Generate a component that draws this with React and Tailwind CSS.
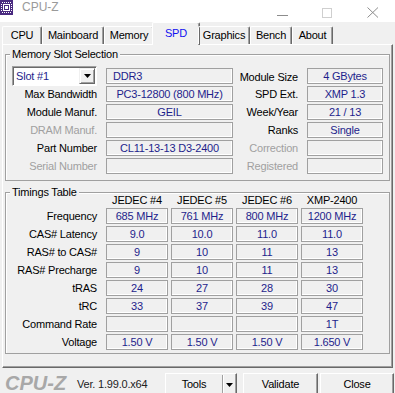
import React from "react";

const VAL = "text-[#1e1e8c]";

function Field({ className = "", children, left = false }) {
  return (
    <div
      className={`h-[16px] border border-[#a0a0a0] shadow-[inset_-1px_-1px_0_#ffffff] flex items-center leading-none whitespace-nowrap ${VAL} ${
        left ? "justify-start pl-[6px]" : "justify-center"
      } ${className}`}
    >
      {children}
    </div>
  );
}

function AppIcon() {
  return (
    <svg width="13" height="15" viewBox="0 0 13 15" className="block">
      <rect x="0" y="0" width="13" height="15" fill="#4a2a80" />
      <g fill="#ffffff">
        <rect x="2" y="2" width="1" height="1" />
        <rect x="4" y="2" width="1" height="1" />
        <rect x="6" y="2" width="1" height="1" />
        <rect x="8" y="2" width="1" height="1" />
        <rect x="10" y="2" width="1" height="1" />
        <rect x="2" y="12" width="1" height="1" />
        <rect x="4" y="12" width="1" height="1" />
        <rect x="6" y="12" width="1" height="1" />
        <rect x="8" y="12" width="1" height="1" />
        <rect x="10" y="12" width="1" height="1" />
        <rect x="1" y="4" width="1" height="1" />
        <rect x="1" y="6" width="1" height="1" />
        <rect x="1" y="8" width="1" height="1" />
        <rect x="1" y="10" width="1" height="1" />
        <rect x="11" y="4" width="1" height="1" />
        <rect x="11" y="6" width="1" height="1" />
        <rect x="11" y="8" width="1" height="1" />
        <rect x="11" y="10" width="1" height="1" />
      </g>
      <rect x="3.5" y="4.5" width="6" height="6" fill="none" stroke="#ffffff" strokeWidth="1" />
      <rect x="5" y="6" width="3" height="3" fill="#ffffff" />
    </svg>
  );
}

function DownTri() {
  return (
    <svg width="7" height="4" viewBox="0 0 7 4" className="block">
      <polygon points="0,0 7,0 3.5,4" fill="#000000" />
    </svg>
  );
}

const tabs = [
  { name: "CPU", cls: "w-[40px]" },
  { name: "Mainboard", cls: "w-[62px]" },
  { name: "Memory", cls: "w-[50px]" },
  { name: "SPD", cls: "w-[44px]", active: true },
  { name: "Graphics", cls: "w-[52px]" },
  { name: "Bench", cls: "w-[42px]" },
  { name: "About", cls: "w-[41px]" },
];

const slotRows = [
  { l: "Max Bandwidth", v: "PC3-12800 (800 MHz)", r: "SPD Ext.", rv: "XMP 1.3" },
  { l: "Module Manuf.", v: "GEIL", r: "Week/Year", rv: "21 / 13" },
  { l: "DRAM Manuf.", dis: true, v: "", r: "Ranks", rv: "Single" },
  { l: "Part Number", v: "CL11-13-13 D3-2400", r: "Correction", rdis: true, rv: "" },
  { l: "Serial Number", dis: true, v: "", r: "Registered", rdis: true, rv: "" },
];

const timings = [
  { l: "Frequency", v: ["685 MHz", "761 MHz", "800 MHz", "1200 MHz"] },
  { l: "CAS# Latency", v: ["9.0", "10.0", "11.0", "11.0"] },
  { l: "RAS# to CAS#", v: ["9", "10", "11", "13"] },
  { l: "RAS# Precharge", v: ["9", "10", "11", "13"] },
  { l: "tRAS", v: ["24", "27", "28", "30"] },
  { l: "tRC", v: ["33", "37", "39", "47"] },
  { l: "Command Rate", v: ["", "", "", "1T"] },
  { l: "Voltage", v: ["1.50 V", "1.50 V", "1.50 V", "1.650 V"] },
];

const BTN =
  "h-[23px] bg-[#f0f0f0] border border-t-white border-l-white border-r-[#696969] border-b-[#696969] shadow-[inset_-1px_-1px_0_#a0a0a0] flex items-center";

export default function App() {
  return (
    <div className="w-[395px] h-[393px] overflow-hidden bg-[#f0f0f0] font-['Liberation_Sans',Arial,sans-serif] text-[11px] tracking-[-0.2px] text-black">
      {/* title bar */}
      <div className="h-[22px] bg-white flex items-start">
        <div className="pt-0">
          <AppIcon />
        </div>
        <div className="ml-[9px] mt-[1px] text-[12px] leading-[13px] tracking-normal text-[#9a9a9a]">CPU-Z</div>
        <div className="ml-auto flex items-start">
          <div className="w-[11px] h-[1px] bg-[#8c8c8c] mt-[15px]" />
          <div className="w-[10px] h-[10px] border border-[#cfcfcf] mt-[8px] ml-[34px]" />
          <svg width="12" height="11" viewBox="0 0 12 11" className="block mt-[7px] ml-[35px] mr-[16px]">
            <path d="M0.5 0.5 L11 10.5 M11 0.5 L0.5 10.5" stroke="#8c8c8c" strokeWidth="1" fill="none" />
          </svg>
        </div>
      </div>

      {/* tabs */}
      <div className="h-[22px] flex items-end pl-[2px] relative z-10">
        {tabs.map((t) =>
          t.active ? (
            <div
              key={t.name}
              className="w-[48px] -mx-[2px] h-[23px] -mb-px bg-[#f0f0f0] border-l border-t border-r border-l-white border-t-white border-r-[#696969] shadow-[inset_-1px_0_0_#a0a0a0] rounded-t-[2px] flex items-start justify-center pt-[4px] text-[#1010f0] leading-[13px]"
            >
              {t.name}
            </div>
          ) : (
            <div
              key={t.name}
              className={`${t.cls} h-[18px] border-l border-t border-r border-l-white border-t-white border-r-[#696969] shadow-[inset_-1px_0_0_#a0a0a0] rounded-t-[2px] flex items-center justify-center leading-[13px]`}
            >
              {t.name}
            </div>
          )
        )}
      </div>

      {/* panel */}
      <div className="ml-[2px] w-[391px] h-[324px] border border-t-white border-l-white border-r-[#696969] border-b-[#696969] shadow-[inset_-1px_-1px_0_#a0a0a0] px-[2px]">
        {/* Memory Slot Selection */}
        <fieldset className="mt-[2px] h-[134px] border border-[#a0a0a0] shadow-[inset_1px_1px_0_#ffffff] pl-[6px] pt-[6px]">
          <legend className="ml-[-2px] px-[2px] leading-[14px] bg-[#f0f0f0]">Memory Slot Selection</legend>
          <div className="flex flex-col">
            <div className="h-[18px] flex items-center">
              <div className="w-[85px] h-[20px] bg-white border border-t-[#a0a0a0] border-l-[#a0a0a0] border-r-white border-b-white shadow-[inset_1px_1px_0_#696969] flex items-center">
                <span className={`pl-[3px] flex-1 ${VAL} leading-none`}>Slot #1</span>
                <div className="w-[16px] h-[16px] mr-[1px] bg-[#f0f0f0] border border-t-[#f0f0f0] border-l-[#f0f0f0] border-r-[#696969] border-b-[#696969] shadow-[inset_1px_1px_0_#ffffff,inset_-1px_-1px_0_#a0a0a0] flex items-center justify-center">
                  <DownTri />
                </div>
              </div>
              <Field className="ml-[9px] w-[127px]" left>
                DDR3
              </Field>
              <div className="w-[65px] text-right leading-[14px] pt-[2px]">Module Size</div>
              <Field className="ml-[9px] w-[76px]">4 GBytes</Field>
            </div>
            {slotRows.map((r) => (
              <div key={r.l} className="h-[18px] flex items-center">
                <div className={`w-[85px] text-right leading-[14px] ${r.dis ? "text-[#a0a0a0]" : ""}`}>{r.l}</div>
                <Field className="ml-[9px] w-[127px]">{r.v}</Field>
                <div className={`w-[65px] text-right leading-[14px] ${r.rdis ? "text-[#a0a0a0]" : ""}`}>{r.r}</div>
                <Field className="ml-[9px] w-[76px]">{r.rv}</Field>
              </div>
            ))}
          </div>
        </fieldset>

        {/* Timings Table */}
        <fieldset className="mt-[4px] h-[169px] border border-[#a0a0a0] shadow-[inset_1px_1px_0_#ffffff] pl-[6px]">
          <legend className="ml-[-2px] px-[2px] leading-[14px] bg-[#f0f0f0]">Timings Table</legend>
          <div className="flex flex-col">
            <div className="-mt-[7px] h-[15px] flex items-center">
              <div className="w-[85px]" />
              <div className="ml-[9px] flex gap-[3px]">
                <div className="w-[62px] text-center leading-[14px]">JEDEC #4</div>
                <div className="w-[62px] text-center leading-[14px]">JEDEC #5</div>
                <div className="w-[62px] text-center leading-[14px]">JEDEC #6</div>
                <div className="w-[62px] text-center leading-[14px]">XMP-2400</div>
              </div>
            </div>
            {timings.map((r) => (
              <div key={r.l} className="h-[18px] flex items-center">
                <div className="w-[85px] text-right leading-[14px] whitespace-nowrap">{r.l}</div>
                <div className="ml-[9px] flex gap-[3px]">
                  {r.v.map((v, i) => (
                    <Field key={i} className="w-[62px]">
                      {v}
                    </Field>
                  ))}
                </div>
              </div>
            ))}
          </div>
        </fieldset>
      </div>

      {/* bottom bar */}
      <div className="flex items-start pt-[5px]">
        <div className="w-[72px] pl-[5px] h-[20px] flex items-center text-[20px] leading-[20px] font-bold italic tracking-normal text-[#a8a8a8]">
          CPU-Z
        </div>
        <div className="ml-[5px] w-[88px] h-[20px] flex items-center text-[#222222] leading-none pt-[2px]">Ver. 1.99.0.x64</div>
        <div className={`${BTN} w-[72px]`}>
          <div className="flex-1 text-center leading-none">Tools</div>
          <div className="w-[1px] h-[19px] bg-[#a0a0a0] shadow-[1px_0_0_#ffffff]" />
          <div className="w-[13px] flex items-center justify-center">
            <DownTri />
          </div>
        </div>
        <div className={`${BTN} ml-[6px] w-[75px] justify-center leading-none`}>Validate</div>
        <div className={`${BTN} ml-[2px] w-[74px] justify-center leading-none`}>Close</div>
      </div>
    </div>
  );
}
